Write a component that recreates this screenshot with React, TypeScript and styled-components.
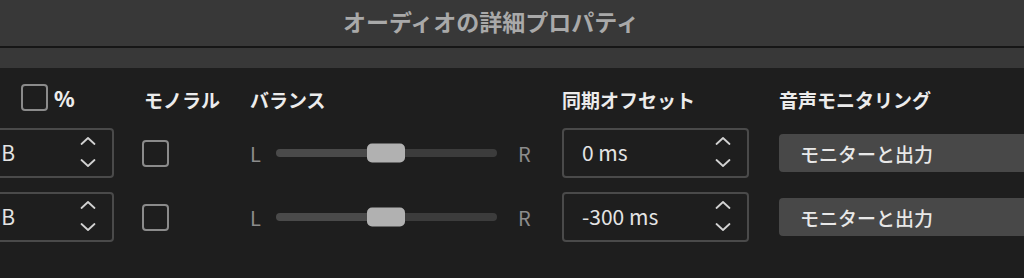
import React from "react";
import styled, { createGlobalStyle } from "styled-components";

const GlobalStyle = createGlobalStyle`
  *, *:before, *:after {
    box-sizing: border-box;
  }
  html, body {
    margin: 0;
    padding: 0;
    background: #1e1e1e;
    overflow: hidden;
  }
  body {
    font-family: "Noto Sans CJK JP", "Noto Sans", sans-serif;
    color: #e6e6e6;
  }
`;

const Window = styled.div`
  width: 1024px;
  height: 278px;
  background: #1e1e1e;
  overflow: hidden;
`;

const TitleBar = styled.div`
  height: 48px;
  background: #383838;
  display: flex;
  align-items: center;
  justify-content: center;
  padding: 0 42px 5px 0;
  border-bottom: 2px solid #161616;
`;

const Title = styled.h1`
  margin: 0;
  font-size: 23px;
  font-weight: 700;
  color: #a9a9a9;
`;

const Strip = styled.div`
  height: 20px;
  background: #383838;
`;

const Grid = styled.div`
  display: grid;
  grid-template-columns: 187px 80px 284px 189px 1fr;
  grid-template-rows: 46px 50px 50px;
  column-gap: 28px;
  row-gap: 14px;
  margin-left: -73px;
  width: 1200px;
`;

const HeaderCell = styled.div<{ $indent?: number }>`
  display: flex;
  align-items: center;
  gap: 6px;
  padding: 16px 0 0 ${(p) => p.$indent ?? 0}px;
  font-size: 19px;
  font-weight: 700;
  color: #ececec;
`;

const Percent = styled.span`
  font-size: 21px;
  font-weight: 800;
  margin-top: -2px;
`;

const Cell = styled.div`
  display: flex;
  align-items: center;
`;

const Checkbox = styled.div<{ $lift?: number }>`
  width: 27px;
  height: 27px;
  border: 2px solid #8b8b8b;
  border-radius: 4px;
  margin-top: ${(p) => -(p.$lift ?? 0)}px;
`;

const Stepper = styled.div`
  width: 187px;
  height: 50px;
  border: 2px solid #4a4a4a;
  border-radius: 4px;
  display: flex;
  align-items: center;
  justify-content: space-between;
  padding: 0 16px 2px 18px;
  font-size: 21px;
  color: #e4e4e4;
`;

const Slider = styled.div`
  display: flex;
  align-items: center;
  width: 100%;
  font-size: 20px;
  color: #8c8c8c;
`;

const Track = styled.div`
  position: relative;
  width: 221px;
  height: 8px;
  margin: 0 21px 0 15px;
  border-radius: 4px;
  background: linear-gradient(to right, #4a4a4a 50%, #3c3c3c 50%);
`;

const Thumb = styled.div`
  position: absolute;
  top: 50%;
  width: 38px;
  height: 19px;
  border-radius: 5px;
  background: #b1b1b1;
  transform: translate(-50%, -50%);
`;

const Select = styled.div`
  width: 100%;
  height: 38px;
  border-radius: 4px;
  background: #484848;
  display: flex;
  align-items: center;
  padding-left: 21px;
  font-size: 19px;
  font-weight: 500;
  color: #e8e8e8;
`;

const Arrows = () => (
  <svg width="16" height="34" viewBox="0 0 16 34" fill="none">
    <path d="M1.5 9 L8 3 L14.5 9" stroke="#d2d2d2" strokeWidth="1.8" strokeLinecap="round" strokeLinejoin="round" />
    <path d="M1.5 25 L8 31 L14.5 25" stroke="#d2d2d2" strokeWidth="1.8" strokeLinecap="round" strokeLinejoin="round" />
  </svg>
);

const rows = [
  { gain: "-6.0 dB", pan: 50, offset: "0 ms", monitor: "モニターと出力" },
  { gain: "-6.0 dB", pan: 50, offset: "-300 ms", monitor: "モニターと出力" },
];

function App() {
  return (
    <Window>
      <GlobalStyle />
      <TitleBar>
        <Title>オーディオの詳細プロパティ</Title>
      </TitleBar>
      <Strip />
      <Grid>
        <HeaderCell $indent={94}>
          <Checkbox $lift={3} />
          <Percent>%</Percent>
        </HeaderCell>
        <HeaderCell $indent={2}>モノラル</HeaderCell>
        <HeaderCell>バランス</HeaderCell>
        <HeaderCell>同期オフセット</HeaderCell>
        <HeaderCell>音声モニタリング</HeaderCell>
        {rows.map((row, i) => (
          <React.Fragment key={i}>
            <Cell>
              <Stepper>
                <span>{row.gain}</span>
                <Arrows />
              </Stepper>
            </Cell>
            <Cell>
              <Checkbox />
            </Cell>
            <Cell>
              <Slider>
                <span>L</span>
                <Track>
                  <Thumb style={{ left: `${row.pan}%` }} />
                </Track>
                <span>R</span>
              </Slider>
            </Cell>
            <Cell>
              <Stepper>
                <span>{row.offset}</span>
                <Arrows />
              </Stepper>
            </Cell>
            <Cell>
              <Select>{row.monitor}</Select>
            </Cell>
          </React.Fragment>
        ))}
      </Grid>
    </Window>
  );
}

export default App;
